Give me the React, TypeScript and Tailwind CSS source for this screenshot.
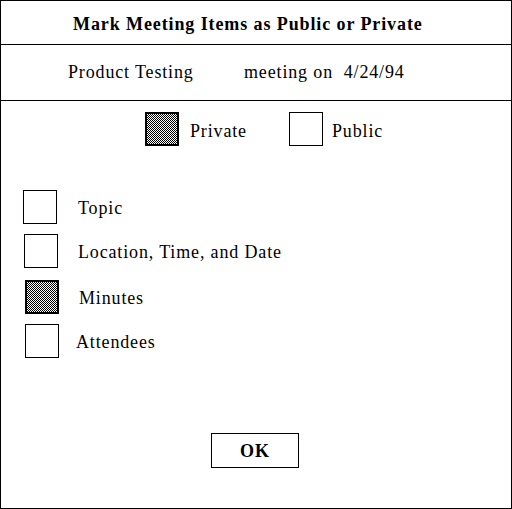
import React from 'react'

const checker =
  'bg-[repeating-conic-gradient(#000_0_25%,#fff_0_50%)] bg-[length:2px_2px]'

function Box({ filled }: { filled?: boolean }) {
  return filled ? (
    <div className={`w-[34px] h-[34px] border-2 border-black shrink-0 ${checker}`} />
  ) : (
    <div className="w-[34px] h-[34px] border border-black bg-white shrink-0" />
  )
}

const items = [
  { label: 'Topic', filled: false, row: 'mt-[44px] pl-[22px]', gap: 'gap-[21px]' },
  { label: 'Location, Time, and Date', filled: false, row: 'mt-[10px] pl-[23px]', gap: 'gap-[20px]' },
  { label: 'Minutes', filled: true, row: 'mt-[12px] pl-[24px]', gap: 'gap-[20px]' },
  { label: 'Attendees', filled: false, row: 'mt-[10px] pl-[24px]', gap: 'gap-[17px]' },
]

export default function App() {
  return (
    <div className="w-[512px] h-[509px] bg-white border border-black flex flex-col text-black text-[18px] tracking-[0.85px] font-['Liberation_Serif','Times_New_Roman',serif]">
      {/* title */}
      <div className="h-[44px] shrink-0 border-b border-black flex items-center pl-[72px] pt-[3px] font-bold tracking-[0.9px]">
        Mark Meeting Items as Public or Private
      </div>

      {/* meeting info */}
      <div className="h-[56px] shrink-0 border-b border-black flex items-center pl-[67px]">
        <span className="w-[176px]">Product Testing</span>
        <span>meeting on&nbsp; 4/24/94</span>
      </div>

      {/* private / public */}
      <div className="flex items-center pl-[144px] mt-[11px]">
        <Box filled />
        <span className="ml-[11px] w-[99px] pt-[4px]">Private</span>
        <Box />
        <span className="ml-[9px] pt-[4px]">Public</span>
      </div>

      {/* items */}
      {items.map(it => (
        <div key={it.label} className={`flex items-center ${it.row} ${it.gap}`}>
          <Box filled={it.filled} />
          <span className="pt-[2px]">{it.label}</span>
        </div>
      ))}

      <div className="mt-[75px] pl-[210px]">
        <button className="w-[88px] h-[35px] border border-black bg-white font-bold tracking-[1px] flex items-center justify-center pt-[2px] font-['Liberation_Serif',serif]">
          OK
        </button>
      </div>
    </div>
  )
}
